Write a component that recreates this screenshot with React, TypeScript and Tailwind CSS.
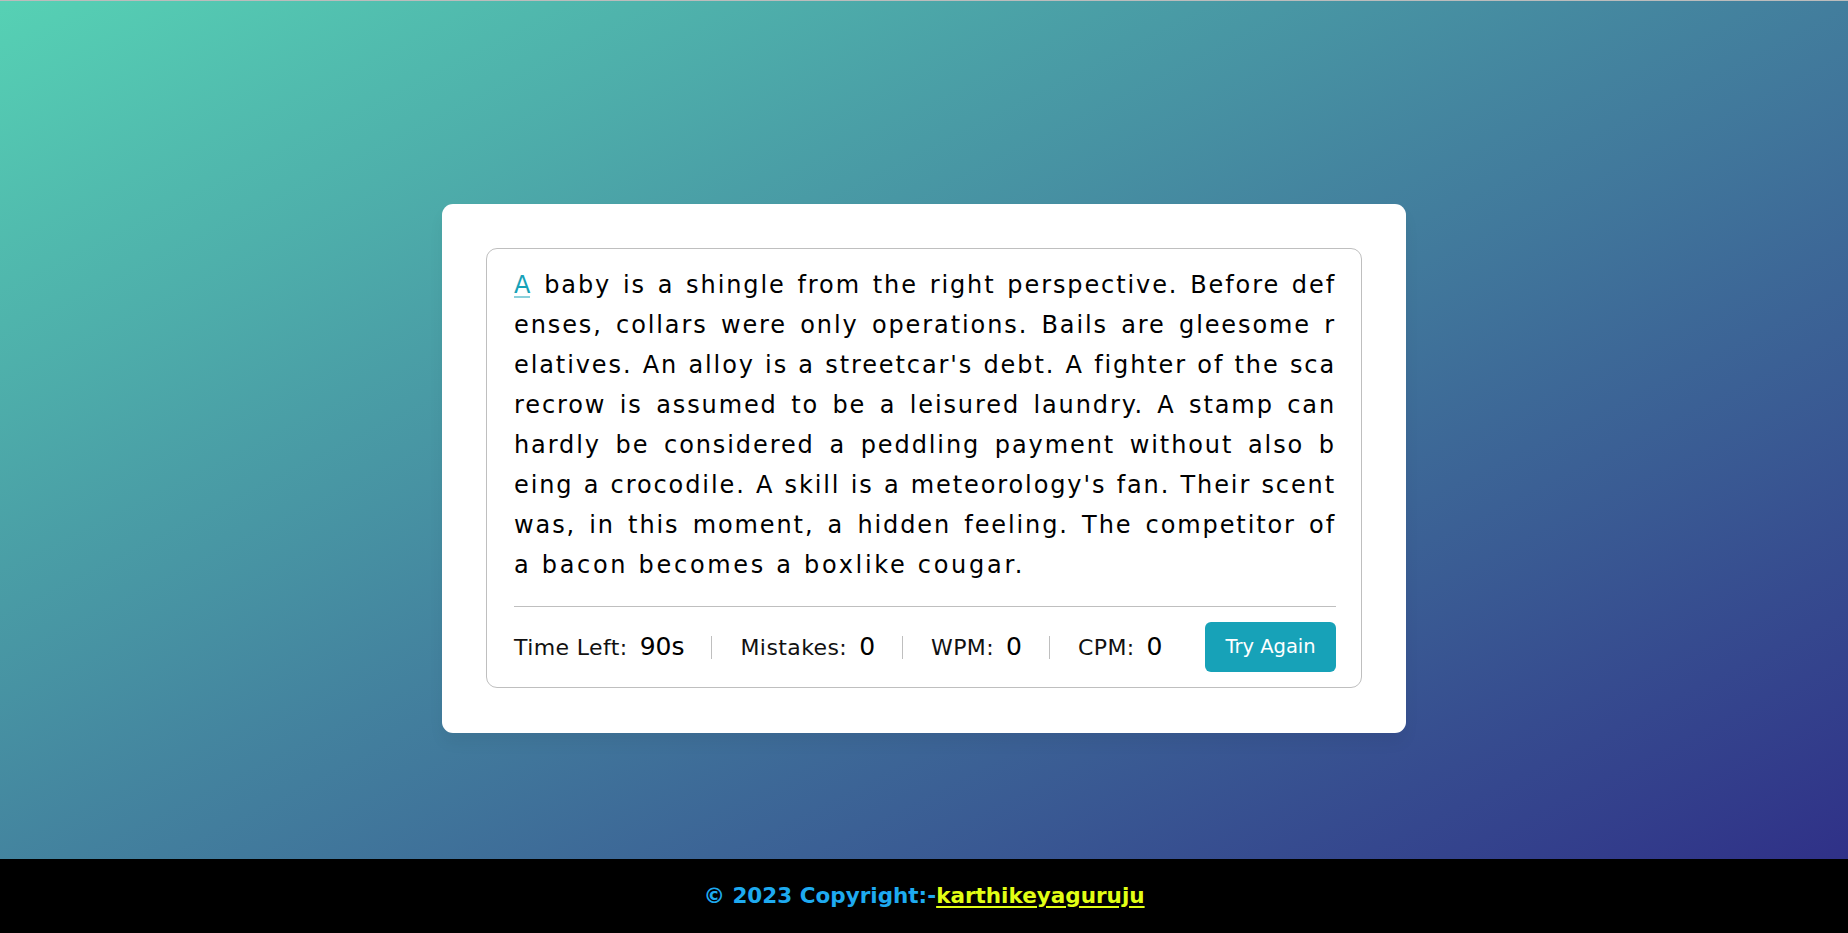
import React from 'react';

const LINES = [
  "baby is a shingle from the right perspective. Before def",
  "enses, collars were only operations. Bails are gleesome r",
  "elatives. An alloy is a streetcar's debt. A fighter of the sca",
  "recrow is assumed to be a leisured laundry. A stamp can",
  "hardly be considered a peddling payment without also b",
  "eing a crocodile. A skill is a meteorology's fan. Their scent",
  "was, in this moment, a hidden feeling. The competitor of",
  "a bacon becomes a boxlike cougar.",
];

const STATS = [
  { label: 'Time Left:', value: '90s' },
  { label: 'Mistakes:', value: '0' },
  { label: 'WPM:', value: '0' },
  { label: 'CPM:', value: '0' },
];

export default function App() {
  return (
    <div className="min-h-screen w-full flex flex-col border-t border-[#bcbcbc] bg-[linear-gradient(to_bottom_right,#56d1b4,#2e2a86)] [font-family:'DejaVu_Sans',sans-serif]">
      {/* Typing test card */}
      <main className="h-[858px] flex justify-center pt-[203px]">
        <div className="w-[964px] h-fit bg-white rounded-[11px] p-[44px] pb-[45px] shadow-[0_10px_15px_rgba(0,0,0,0.05)]">
          <div className="border border-[#bfbfbf] rounded-[11px] pl-[27px] pr-[25px] pt-[16px]">
            <div className="text-[24px] leading-[40px] tracking-[1.9px] text-black">
              {LINES.map((line, i) => (
                <div
                  key={i}
                  className={
                    i < LINES.length - 1
                      ? 'text-justify [text-align-last:justify] whitespace-nowrap'
                      : 'whitespace-nowrap tracking-[2.7px]'
                  }
                >
                  {i === 0 && (
                    <>
                      <span className="relative text-[#17a2b8]">
                        A
                        <span className="absolute left-0 right-[2px] bottom-[1px] h-[2px] bg-[#17a2b8]/50" />
                      </span>{' '}
                    </>
                  )}
                  {line}
                </div>
              ))}
            </div>

            {/* Stats row */}
            <div className="mt-[21px] border-t border-[#bfbfbf] py-[15px] flex items-center justify-between">
              <ul className="flex items-center">
                {STATS.map((s, i) => (
                  <li
                    key={s.label}
                    className={
                      'flex items-center h-[23px] ' +
                      (i > 0 ? 'pl-[28px] border-l border-[#bfbfbf] ' : '') +
                      (i < STATS.length - 1 ? 'mr-[27px]' : '')
                    }
                  >
                    <span className="text-[22px] tracking-[0.4px] text-[#111]">{s.label}</span>
                    <span className="ml-[12px] text-[25px] text-black">{s.value}</span>
                  </li>
                ))}
              </ul>
              <button className="w-[131px] h-[50px] rounded-[6px] bg-[#17a2b8] text-white text-[19.5px]">
                Try Again
              </button>
            </div>
          </div>
        </div>
      </main>

      {/* Footer */}
      <footer className="h-[74px] bg-black flex items-center justify-center">
        <p className="text-[21.5px] font-bold text-[#1eaaf0]">
          © 2023 Copyright:-
          <a className="text-[#e2ff14] underline underline-offset-[3px]" href="#">
            karthikeyaguruju
          </a>
        </p>
      </footer>
    </div>
  );
}
